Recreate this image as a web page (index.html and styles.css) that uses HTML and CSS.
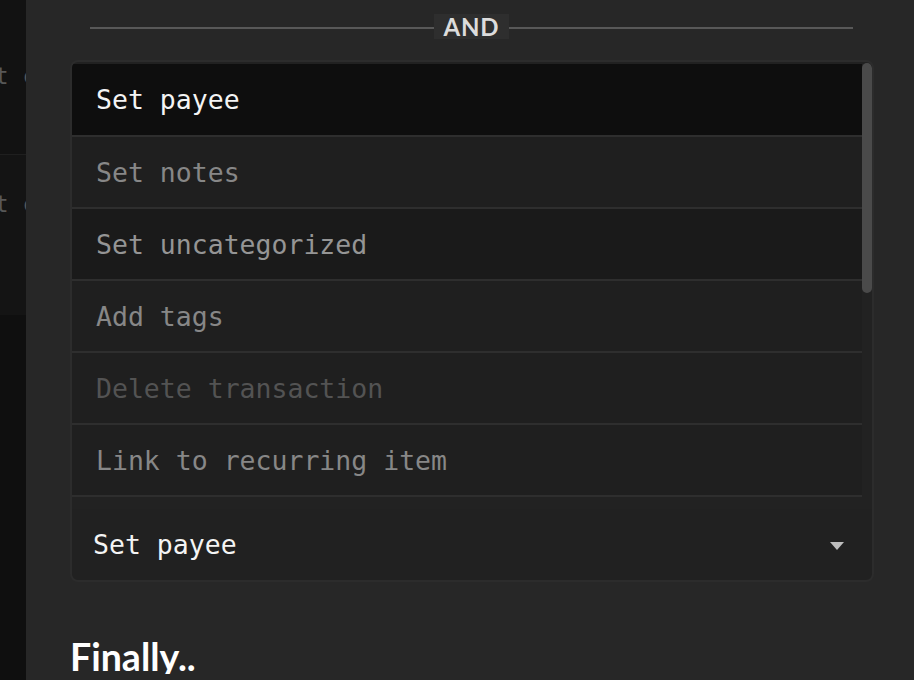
FILE: index.html
```html
<!DOCTYPE html>
<html>
<head>
<meta charset="utf-8">
<link rel="stylesheet" href="styles.css">
</head>
<body>
<div class="side">
  <div class="side-row first"><span class="side-text">Set condition</span></div>
  <div class="side-row second"><span class="side-text">Set condition</span></div>
  <div class="side-rest"></div>
</div>
<main class="main">
  <div class="divider">
    <span class="divider-line"></span>
    <span class="divider-label">AND</span>
    <span class="divider-line"></span>
  </div>
  <div class="dropdown">
    <div class="list">
      <ul class="options">
        <li class="option active">Set payee</li>
        <li class="option">Set notes</li>
        <li class="option alt">Set uncategorized</li>
        <li class="option">Add tags</li>
        <li class="option disabled">Delete transaction</li>
        <li class="option">Link to recurring item</li>
      </ul>
      <div class="scroll-track"><div class="scroll-thumb"></div></div>
    </div>
    <div class="select">
      <span class="select-value">Set payee</span>
      <svg class="caret" width="14" height="8" viewBox="0 0 14 8"><path d="M0 0 H14 L7 8 Z" fill="#bdbdbd"/></svg>
    </div>
  </div>
  <h2 class="heading">Finally..</h2>
</main>
</body>
</html>
```
FILE: styles.css
```css
html, body {
  margin: 0;
  padding: 0;
}
body {
  width: 914px;
  height: 680px;
  overflow: hidden;
  display: flex;
  background: #272727;
  font-family: "DejaVu Sans Mono", "Liberation Mono", monospace;
}
.side {
  width: 26px;
  flex: none;
  display: flex;
  flex-direction: column;
  overflow: hidden;
  background: #101010;
}
.side-row {
  box-sizing: border-box;
  white-space: nowrap;
  font-size: 23px;
  line-height: 30px;
  color: #575757;
}
.side-row.first {
  height: 155px;
  padding-top: 61px;
  background: #121212;
  border-bottom: 1px solid #1f1f1f;
}
.side-row.second {
  height: 160px;
  padding-top: 34px;
  background: #141414;
}
.side-text {
  display: block;
  margin-left: -33px;
}
.side-rest {
  flex: 1;
  background: #0f0f0f;
}
.main {
  flex: 1;
  box-sizing: border-box;
  padding: 14px 40px 0 44px;
  display: flex;
  flex-direction: column;
}
.divider {
  display: flex;
  align-items: center;
  margin: 0 21px 0 20px;
  height: 25px;
  flex: none;
}
.divider-line {
  flex: 1;
  height: 2px;
  margin-top: 2px;
  background: #585858;
}
.divider-label {
  height: 25px;
  padding: 0 10px;
  background: #2e2e2e;
  font-family: Lato, "Liberation Sans", sans-serif;
  font-weight: 700;
  font-size: 24px;
  line-height: 26px;
  letter-spacing: 0.8px;
  color: #dcdcdc;
}
.dropdown {
  margin-top: 21px;
  height: 522px;
  flex: none;
  box-sizing: border-box;
  border: 2px solid #2c2c2c;
  border-radius: 8px;
  background: #212121;
  padding-top: 2px;
  display: flex;
  flex-direction: column;
  overflow: hidden;
}
.list {
  display: flex;
  background: #222222;
  padding-bottom: 12px;
}
.options {
  list-style: none;
  margin: 0;
  padding: 0;
  flex: 1;
}
.option {
  height: 70px;
  border-bottom: 2px solid #2e2e2e;
  display: flex;
  align-items: center;
  padding-left: 24px;
  font-size: 26.5px;
  background: #1f1f1f;
  color: #878787;
}
.option.active {
  height: 71px;
  background: #0e0e0e;
  color: #f4f4f4;
}
.option.alt {
  background: #1a1a1a;
  color: #959595;
}
.option.disabled {
  color: #535353;
}
.scroll-track {
  width: 10px;
  flex: none;
}
.scroll-thumb {
  margin-top: -1px;
  height: 230px;
  border-radius: 5px;
  background: #4a4a4a;
}
.select {
  flex: 1;
  display: flex;
  align-items: center;
  justify-content: space-between;
  padding: 0 28px 0 21px;
  font-size: 26.5px;
  color: #f4f4f4;
}
.caret {
  display: block;
  margin-top: 2px;
}
.heading {
  margin: 52px 0 0 0;
  height: 40px;
  overflow: hidden;
  flex: none;
  font-family: Lato, "Liberation Sans", sans-serif;
  font-weight: 700;
  font-size: 37.5px;
  line-height: 1.2;
  color: #ffffff;
}
```
